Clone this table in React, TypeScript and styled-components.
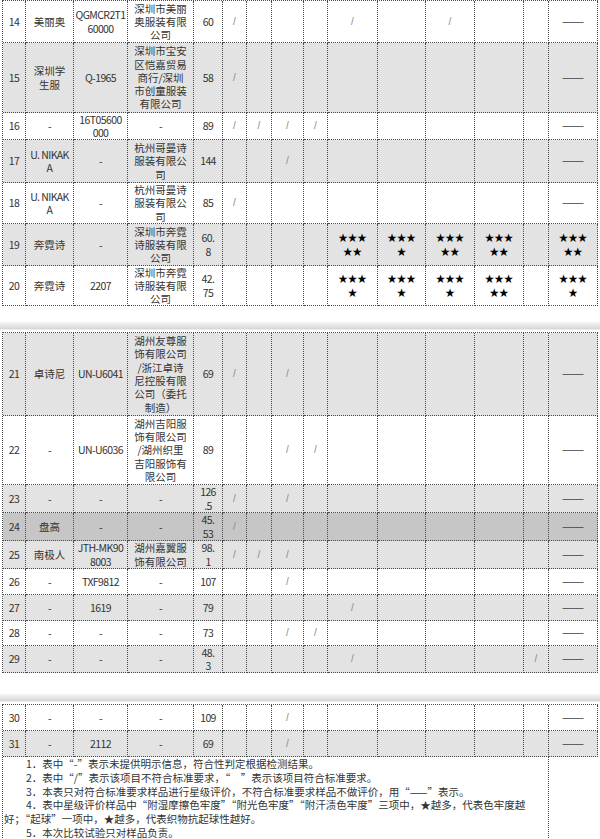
import styled, { createGlobalStyle } from 'styled-components';

const GlobalStyle = createGlobalStyle`
  html, body {
    margin: 0;
    padding: 0;
    background: #fff;
  }
  body {
    font-family: "Noto Sans CJK SC", "Noto Sans", sans-serif;
    color: #333;
    overflow: hidden;
  }
`;

// column widths, border to border
const COLS = '23px 48px 54px 66px 29px 24px 25px 32px 24px 50px 48px 49px 49px 25px 49px';
const LINE = '1px dotted #4a4a4a';

type Tone = 'plain' | 'shade' | 'dark';
const toneBg: Record<Tone, string> = { plain: '#ffffff', shade: '#e3e3e3', dark: '#c6c6c6' };

const Page = styled.div`
  width: 600px;
`;

const Sheet = styled.div`
  margin-left: 2px;
  width: 596px;
  box-sizing: border-box;
  border-top: ${LINE};
  border-left: ${LINE};
`;

const PageGap = styled.div<{ $h: number }>`
  height: ${p => p.$h}px;
  display: flex;
  flex-direction: column;
  justify-content: flex-end;
  padding-bottom: 2px;
  box-sizing: border-box;
`;

const Shade = styled.div`
  height: 7px;
  background: linear-gradient(#f6f6f6, #d6d6d6);
  border-bottom: 1px solid #ececec;
`;

const Row = styled.div<{ $h: number; $tone: Tone }>`
  display: grid;
  grid-template-columns: ${COLS};
  height: ${p => p.$h}px;
  background: ${p => toneBg[p.$tone]};
`;

const Cell = styled.div`
  border-right: ${LINE};
  border-bottom: ${LINE};
  display: flex;
  flex-direction: column;
  align-items: center;
  justify-content: center;
  font-size: 10.5px;
  line-height: 13.3px;
  text-align: center;
  white-space: nowrap;
  overflow: hidden;
`;

const Text = styled.span`
  display: block;
  height: 13.3px;
`;

const Latin = styled(Text)`
  letter-spacing: -0.6px;
`;

const Mark = styled.span`
  font-family: "Liberation Sans", sans-serif;
  font-size: 10px;
  color: #8a8a8a;
`;

const Dash = styled.span`
  font-family: "Liberation Sans", sans-serif;
  font-size: 10.5px;
  color: #444;
`;

const Stars = styled(Text)`
  font-size: 9.5px;
  color: #000;
`;

const NotesRow = styled.div`
  display: grid;
  grid-template-columns: 546px 49px;
  min-height: 83px;
`;

const NotesText = styled.div`
  border-right: ${LINE};
  padding-left: 1px;
  font-size: 10.5px;
  line-height: 13.8px;
  color: #333;
`;

const NoteLine = styled.div<{ $indent?: boolean }>`
  padding-left: ${p => (p.$indent ? 22 : 0)}px;
  white-space: nowrap;
`;

const NotesSide = styled.div``;

type V = string | string[];
type RowData = { h: number; tone: Tone; cells: V[] };

const E = '';
const S = '/';
const D = '——';

const part1: RowData[] = [
  { h: 42, tone: 'plain', cells: ['14', '美丽奥', ['QGMCR2T1', '60000'], ['深圳市美丽', '奥服装有限', '公司'], '60', S, E, E, E, S, E, S, E, E, D] },
  { h: 70, tone: 'shade', cells: ['15', ['深圳学', '生服'], 'Q-1965', ['深圳市宝安', '区恺嘉贸易', '商行/深圳', '市创童服装', '有限公司'], '58', S, E, E, E, E, E, E, E, E, D] },
  { h: 27, tone: 'plain', cells: ['16', '-', ['16T05600', '000'], '-', '89', S, S, S, S, E, E, E, E, E, D] },
  { h: 43, tone: 'shade', cells: ['17', ['U. NIKAK', 'A'], '-', ['杭州哥曼诗', '服装有限公', '司'], '144', E, E, S, E, E, E, E, E, E, D] },
  { h: 41, tone: 'plain', cells: ['18', ['U. NIKAK', 'A'], '-', ['杭州哥曼诗', '服装有限公', '司'], '85', S, E, E, E, E, E, E, E, E, D] },
  { h: 42, tone: 'shade', cells: ['19', '奔霓诗', '-', ['深圳市奔霓', '诗服装有限', '公司'], ['60.', '8'], E, E, E, E, ['★★★', '★★'], ['★★★', '★'], ['★★★', '★★'], ['★★★', '★★'], E, ['★★★', '★★']] },
  { h: 40, tone: 'plain', cells: ['20', '奔霓诗', '2207', ['深圳市奔霓', '诗服装有限', '公司'], ['42.', '75'], E, E, E, E, ['★★★', '★'], ['★★★', '★'], ['★★★', '★'], ['★★★', '★★'], E, ['★★★', '★']] },
];

const part2: RowData[] = [
  { h: 83, tone: 'shade', cells: ['21', '卓诗尼', 'UN-U6041', ['湖州友尊服', '饰有限公司', '/浙江卓诗', '尼控股有限', '公司（委托', '制造）'], '69', S, E, S, E, E, E, E, E, E, D] },
  { h: 69, tone: 'plain', cells: ['22', '-', 'UN-U6036', ['湖州吉阳服', '饰有限公司', '/湖州织里', '吉阳服饰有', '限公司'], '89', E, E, S, S, E, E, E, E, E, D] },
  { h: 28, tone: 'shade', cells: ['23', '-', '-', '-', ['126', '.5'], S, E, S, E, E, E, E, E, E, D] },
  { h: 28, tone: 'dark', cells: ['24', '盘高', '-', '-', ['45.', '53'], S, E, E, E, E, E, E, E, E, D] },
  { h: 28, tone: 'shade', cells: ['25', '南极人', ['JTH-MK90', '8003'], ['湖州嘉翼服', '饰有限公司'], ['98.', '1'], S, S, S, E, E, E, E, E, E, D] },
  { h: 26, tone: 'plain', cells: ['26', '-', 'TXF9812', '-', '107', E, E, S, E, E, E, E, E, E, D] },
  { h: 26, tone: 'shade', cells: ['27', '-', '1619', '-', '79', E, E, E, E, S, E, E, E, E, D] },
  { h: 25, tone: 'plain', cells: ['28', '-', '-', '-', '73', E, E, S, S, E, E, E, E, E, D] },
  { h: 27, tone: 'shade', cells: ['29', '-', '-', '-', ['48.', '3'], E, E, E, E, S, E, E, E, S, D] },
];

const part3: RowData[] = [
  { h: 26, tone: 'plain', cells: ['30', '-', '-', '-', '109', E, E, S, E, E, E, E, E, E, D] },
  { h: 26, tone: 'shade', cells: ['31', '-', '2112', '-', '69', E, E, S, E, E, E, E, E, E, D] },
];

const notes: { text: string; indent: boolean }[] = [
  { text: '1．表中“-”表示未提供明示信息，符合性判定根据检测结果。', indent: true },
  { text: '2．表中“/”表示该项目不符合标准要求，“　”表示该项目符合标准要求。', indent: true },
  { text: '3．本表只对符合标准要求样品进行星级评价，不符合标准要求样品不做评价，用“——”表示。', indent: true },
  { text: '4．表中星级评价样品中“附湿摩擦色牢度”“附光色牢度”“附汗渍色牢度”三项中，★越多，代表色牢度越', indent: true },
  { text: '好；“起球”一项中，★越多，代表织物抗起球性越好。', indent: false },
  { text: '5．本次比较试验只对样品负责。', indent: true },
];

const latinOnly = /^[A-Za-z0-9.\- ]+$/;

function renderValue(v: V) {
  if (v === S) return <Mark>/</Mark>;
  if (v === D) return <Dash>——</Dash>;
  const lines = Array.isArray(v) ? v : [v];
  if (lines[0] && lines[0].startsWith('★')) {
    return lines.map((l, i) => <Stars key={i}>{l}</Stars>);
  }
  return lines.map((l, i) =>
    latinOnly.test(l) ? <Latin key={i}>{l}</Latin> : <Text key={i}>{l}</Text>
  );
}

function Rows({ rows }: { rows: RowData[] }) {
  return (
    <>
      {rows.map((r, i) => (
        <Row key={i} $h={r.h} $tone={r.tone}>
          {r.cells.map((c, j) => (
            <Cell key={j}>{renderValue(c)}</Cell>
          ))}
        </Row>
      ))}
    </>
  );
}

function App() {
  return (
    <Page>
      <GlobalStyle />
      <Sheet>
        <Rows rows={part1} />
      </Sheet>
      <PageGap $h={26}>
        <Shade />
      </PageGap>
      <Sheet>
        <Rows rows={part2} />
      </Sheet>
      <PageGap $h={31}>
        <Shade />
      </PageGap>
      <Sheet>
        <Rows rows={part3} />
        <NotesRow>
          <NotesText>
            {notes.map((n, i) => (
              <NoteLine key={i} $indent={n.indent}>{n.text}</NoteLine>
            ))}
          </NotesText>
          <NotesSide />
        </NotesRow>
      </Sheet>
    </Page>
  );
}

export default App;
